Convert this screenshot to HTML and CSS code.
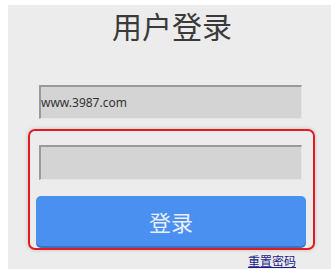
FILE: index.html
```html
<!DOCTYPE html>
<html>
<head>
<meta charset="utf-8">
<link rel="stylesheet" href="styles.css">
</head>
<body>
<div class="panel">
  <h1 class="title">用户登录</h1>
  <div class="field user">www.3987.com</div>
  <div class="group">
    <div class="field pass"></div>
    <div class="btn">登录</div>
  </div>
  <div class="links"><a class="reset" href="#">重置密码</a></div>
</div>
</body>
</html>
```
FILE: styles.css
```css
html, body {
  margin: 0;
  padding: 0;
  background: #ffffff;
}
body {
  font-family: "Noto Sans CJK SC", "Noto Sans", sans-serif;
}
.panel {
  margin: 5px 0 0 8px;
  width: 323px;
  height: 264px;
  background: #ececec;
  display: flex;
  flex-direction: column;
}
.title {
  margin: 0;
  height: 40px;
  line-height: 40px;
  padding-left: 5px;
  text-align: center;
  font-size: 30px;
  font-weight: normal;
  color: #3a3a3a;
}
.field {
  box-sizing: border-box;
  width: 263px;
  background: #d4d4d4;
  border-top: 2px solid #9a9a9a;
  border-left: 2px solid #9a9a9a;
  border-right: 1px solid #e6e6e6;
  border-bottom: 1px solid #e6e6e6;
  font-size: 12px;
  color: #333;
  display: flex;
  align-items: center;
  padding-left: 0;
}
.user {
  margin: 40px 0 0 31px;
  height: 34px;
  font-family: "Noto Sans", "Noto Sans CJK SC", sans-serif;
}
.group {
  box-sizing: border-box;
  margin: 10px 0 0 20px;
  width: 287px;
  height: 121px;
  border: 2px solid #e51a20;
  border-radius: 7px;
  box-shadow: 0 0 4px rgba(0, 0, 0, 0.18);
  display: flex;
  flex-direction: column;
  padding: 14px 0 0 9px;
}
.pass {
  height: 35px;
}
.btn {
  box-sizing: border-box;
  margin: 16px 0 0 -3px;
  width: 270px;
  height: 50px;
  background: #4a90f0;
  border-radius: 5px;
  box-shadow: 0 2px 0 #3a72c4;
  color: #e8eefc;
  font-size: 22px;
  display: flex;
  align-items: center;
  justify-content: center;
}
.links {
  margin-top: 4px;
  padding-right: 35px;
  display: flex;
  justify-content: flex-end;
}
.reset {
  font-size: 12px;
  line-height: 14px;
  color: #1c1c8a;
  text-decoration: underline;
}
```
